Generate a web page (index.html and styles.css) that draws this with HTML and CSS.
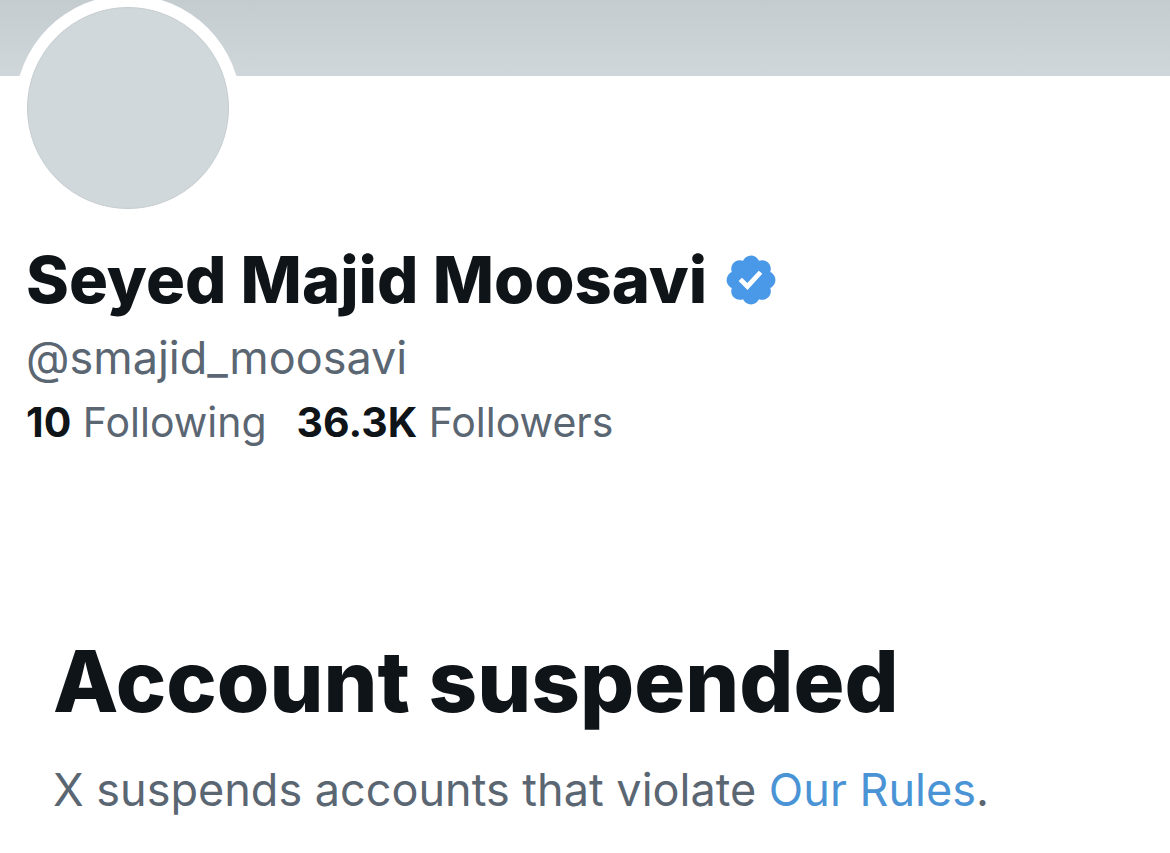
FILE: index.html
```html
<!DOCTYPE html>
<html lang="en">
<head>
<meta charset="utf-8">
<meta name="viewport" content="width=device-width, initial-scale=1">
<title>Seyed Majid Moosavi</title>
<link rel="stylesheet" href="styles.css">
</head>
<body>
<header class="banner"></header>
<main>
  <section class="profile">
    <div class="avatar"><div class="avatar-image"></div></div>
    <div class="name-row">
      <h1 class="name">Seyed Majid Moosavi</h1>
      <svg class="badge" viewBox="1 1 20 20" role="img" aria-label="Verified account"><path fill="#4a99e9" d="M20.396 11c-.018-.646-.215-1.275-.57-1.816-.354-.54-.852-.972-1.438-1.246.223-.607.27-1.264.14-1.897-.131-.634-.437-1.218-.882-1.687-.47-.445-1.053-.75-1.687-.882-.633-.13-1.29-.083-1.897.14-.273-.587-.704-1.086-1.245-1.44S11.647 1.62 11 1.604c-.646.017-1.273.213-1.813.568s-.969.854-1.24 1.44c-.608-.223-1.267-.272-1.902-.14-.635.13-1.22.436-1.69.882-.445.47-.749 1.055-.878 1.688-.13.633-.08 1.29.144 1.896-.587.274-1.087.705-1.443 1.245-.356.54-.555 1.17-.574 1.817.02.647.218 1.276.574 1.817.356.54.856.972 1.443 1.245-.224.606-.274 1.263-.144 1.896.13.634.433 1.218.877 1.688.47.443 1.054.747 1.687.878.633.132 1.29.084 1.897-.136.274.586.705 1.084 1.246 1.439.54.354 1.17.551 1.816.569.647-.016 1.276-.213 1.817-.567s.972-.854 1.245-1.44c.604.239 1.266.296 1.903.164.636-.132 1.22-.447 1.68-.907.46-.46.776-1.044.908-1.681s.075-1.299-.165-1.903c.586-.274 1.084-.705 1.439-1.246.354-.54.551-1.17.569-1.816z"/><path fill="#fff" d="M9.662 14.85l-3.429-3.428 1.293-1.302 2.072 2.072 4.4-4.794 1.347 1.246z"/></svg>
    </div>
    <p class="handle">@smajid_moosavi</p>
    <nav class="stats">
      <a href="#following"><strong>10</strong> Following</a>
      <a href="#followers"><strong>36.3K</strong> Followers</a>
    </nav>
  </section>
  <section class="notice">
    <h2 class="notice-title">Account suspended</h2>
    <p class="notice-text">X suspends accounts that violate <a class="link" href="#rules">Our Rules</a>.</p>
  </section>
</main>
</body>
</html>
```
FILE: styles.css
```css
* { box-sizing: border-box; }
body { margin: 0; background: #fff; color: #0f1419; font-family: Inter, "Liberation Sans", sans-serif; }
h1, h2, p { margin: 0; }
a { color: inherit; text-decoration: none; }
.banner { height: 76px; background: linear-gradient(#c5ccd0, #cfd7da); }
.profile { padding: 0 26px; }
.avatar { width: 226px; height: 226px; margin: -81px 0 0 -11px; padding: 12px; border-radius: 50%; background: #fff; position: relative; }
.avatar-image { height: 100%; border: 1px solid #c5cccf; border-radius: 50%; background: #d0d8dc; }
.name-row { display: flex; align-items: center; gap: 18px; height: 84px; margin-top: 17px; }
.name { font-size: 65px; line-height: 84px; font-weight: 800; white-space: nowrap; }
.badge { width: 52px; height: 52px; flex: none; }
.handle { margin-top: 6px; color: #5b6673; font-size: 45px; line-height: 60px; }
.stats { display: flex; flex-wrap: wrap; gap: 0 30px; margin-top: 6px; color: #5b6673; font-size: 41px; line-height: 56px; }
.stats strong { color: #0f1419; font-weight: 700; }
.notice { padding: 178px 53px 32px; }
.notice-title { font-size: 85px; line-height: 108px; font-weight: 800; }
.notice-text { margin-top: 24px; color: #5b6673; font-size: 45px; line-height: 60px; }
.link { color: #4a94d6; }
```
